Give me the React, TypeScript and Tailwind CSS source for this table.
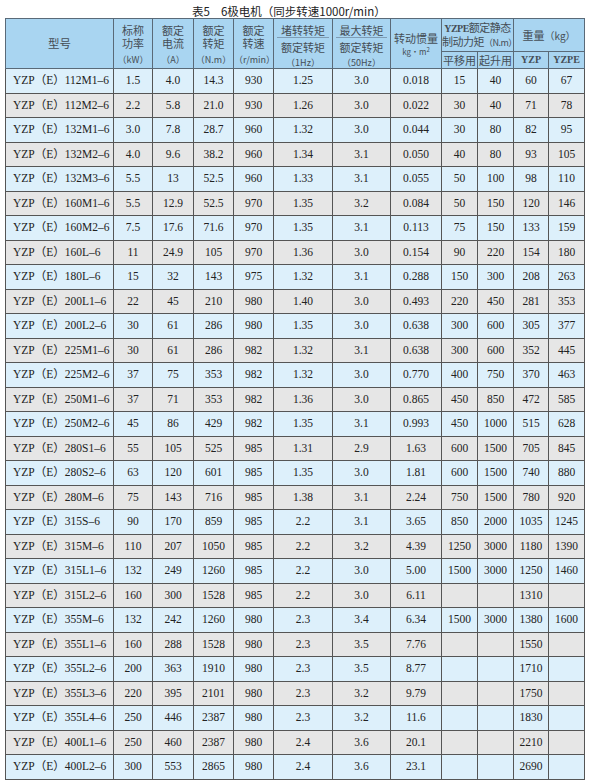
const rows: string[][] = [
  ['112M1–6', '1.5', '4.0', '14.3', '930', '1.25', '3.0', '0.018', '15', '40', '60', '67'],
  ['112M2–6', '2.2', '5.8', '21.0', '930', '1.26', '3.0', '0.022', '30', '40', '71', '78'],
  ['132M1–6', '3.0', '7.8', '28.7', '960', '1.32', '3.0', '0.044', '30', '80', '82', '95'],
  ['132M2–6', '4.0', '9.6', '38.2', '960', '1.34', '3.1', '0.050', '40', '80', '93', '105'],
  ['132M3–6', '5.5', '13', '52.5', '960', '1.33', '3.1', '0.055', '50', '100', '98', '110'],
  ['160M1–6', '5.5', '12.9', '52.5', '970', '1.35', '3.2', '0.084', '50', '150', '120', '146'],
  ['160M2–6', '7.5', '17.6', '71.6', '970', '1.35', '3.1', '0.113', '75', '150', '133', '159'],
  ['160L–6', '11', '24.9', '105', '970', '1.36', '3.0', '0.154', '90', '220', '154', '180'],
  ['180L–6', '15', '32', '143', '975', '1.32', '3.1', '0.288', '150', '300', '208', '263'],
  ['200L1–6', '22', '45', '210', '980', '1.40', '3.0', '0.493', '220', '450', '281', '353'],
  ['200L2–6', '30', '61', '286', '980', '1.35', '3.0', '0.638', '300', '600', '305', '377'],
  ['225M1–6', '30', '61', '286', '982', '1.32', '3.1', '0.638', '300', '600', '352', '445'],
  ['225M2–6', '37', '75', '353', '982', '1.32', '3.0', '0.770', '400', '750', '370', '463'],
  ['250M1–6', '37', '71', '353', '982', '1.36', '3.0', '0.865', '450', '850', '472', '585'],
  ['250M2–6', '45', '86', '429', '982', '1.35', '3.1', '0.993', '450', '1000', '515', '628'],
  ['280S1–6', '55', '105', '525', '985', '1.31', '2.9', '1.63', '600', '1500', '705', '845'],
  ['280S2–6', '63', '120', '601', '985', '1.35', '3.0', '1.81', '600', '1500', '740', '880'],
  ['280M–6', '75', '143', '716', '985', '1.38', '3.1', '2.24', '750', '1500', '780', '920'],
  ['315S–6', '90', '170', '859', '985', '2.2', '3.1', '3.65', '850', '2000', '1035', '1245'],
  ['315M–6', '110', '207', '1050', '985', '2.2', '3.2', '4.39', '1250', '3000', '1180', '1390'],
  ['315L1–6', '132', '249', '1260', '985', '2.2', '3.0', '5.00', '1500', '3000', '1250', '1460'],
  ['315L2–6', '160', '300', '1528', '985', '2.2', '3.0', '6.11', '', '', '1310', ''],
  ['355M–6', '132', '242', '1260', '980', '2.3', '3.4', '6.34', '1500', '3000', '1380', '1600'],
  ['355L1–6', '160', '288', '1528', '980', '2.3', '3.5', '7.76', '', '', '1550', ''],
  ['355L2–6', '200', '363', '1910', '980', '2.3', '3.5', '8.77', '', '', '1710', ''],
  ['355L3–6', '220', '395', '2101', '980', '2.3', '3.2', '9.79', '', '', '1750', ''],
  ['355L4–6', '250', '446', '2387', '980', '2.3', '3.2', '11.6', '', '', '1830', ''],
  ['400L1–6', '250', '460', '2387', '980', '2.4', '3.6', '20.1', '', '', '2210', ''],
  ['400L2–6', '300', '553', '2865', '980', '2.4', '3.6', '23.1', '', '', '2690', ''],
]

const widths = [108, 39, 41, 40, 40, 59, 58, 51, 36, 36, 35, 36]

// header cells that stack name + unit
function Rated({ a, b, unit }: { a: string; b: string; unit: string }) {
  return (
    <th rowSpan={2} className="border border-[#5a6a78] align-top pt-[5px] font-normal">
      <div className="leading-[13px]">
        {a}
        <br />
        {b}
      </div>
      <div className="mt-[5px] text-[9px] leading-[10px]">{unit}</div>
    </th>
  )
}

function Ratio({ top, unit }: { top: string; unit: string }) {
  return (
    <th rowSpan={2} className="border border-[#5a6a78] align-top pt-[4px] font-normal">
      <div className="mx-[3px] leading-[14px] border-b border-[#7f9db5]">{top}</div>
      <div className="mt-[2px] leading-[14px]">额定转矩</div>
      <div className="mt-[4px] text-[9px] leading-[10px]">{unit}</div>
    </th>
  )
}

export default function App() {
  return (
    <div className="w-[589px] h-[780px] bg-white font-['Liberation_Serif','Noto_Sans_CJK_SC',serif]">
      <div className="h-[18px] pt-[4px] pl-[192px] flex text-[11.5px] leading-[14px] text-[#222] font-['Noto_Sans_CJK_SC',sans-serif]">
        <span>表5</span>
        <span className="ml-[11px]">6极电机（同步转速1000r/min）</span>
      </div>
      <table className="ml-[5px] w-[579px] table-fixed border-collapse">
        <colgroup>
          {widths.map((w, i) => (
            <col key={i} style={{ width: w }} />
          ))}
        </colgroup>
        <thead className="bg-[#a9d5f1] text-[#454d55] text-[11px] font-['Noto_Sans_CJK_SC',sans-serif]">
          <tr className="h-[32px]">
            <th rowSpan={2} className="border border-[#5a6a78] font-normal text-[11.5px]">型号</th>
            <Rated a="标称" b="功率" unit="（kW）" />
            <Rated a="额定" b="电流" unit="（A）" />
            <Rated a="额定" b="转矩" unit="（N.m）" />
            <Rated a="额定" b="转速" unit="（r/min）" />
            <Ratio top="堵转转矩" unit="（1Hz）" />
            <Ratio top="最大转矩" unit="（50Hz）" />
            <th rowSpan={2} className="border border-[#5a6a78] font-normal">
              <div className="leading-[14px]">转动惯量</div>
              <div className="mt-[2px] text-[8px] leading-[10px]">
                kg·m<sup className="text-[6px]">2</sup>
              </div>
            </th>
            <th colSpan={2} className="border border-[#5a6a78] font-normal tracking-[-0.5px]">
              <div className="leading-[12px] whitespace-nowrap">
                <span className="font-['Liberation_Serif',serif] text-[10px] font-semibold">YZPE</span>额定静态
              </div>
              <div className="leading-[12px] whitespace-nowrap">
                制动力矩<span className="text-[9px]">（N.m）</span>
              </div>
            </th>
            <th colSpan={2} className="border border-[#5a6a78] font-normal">
              重量<span className="text-[10px]">（kg）</span>
            </th>
          </tr>
          <tr className="h-[17px]">
            <th className="border border-[#5a6a78] font-normal text-[11px] leading-[16px]">平移用</th>
            <th className="border border-[#5a6a78] font-normal text-[11px] leading-[16px]">起升用</th>
            <th className="border border-[#5a6a78] font-semibold text-[10px] leading-[16px] font-['Liberation_Serif',serif]">YZP</th>
            <th className="border border-[#5a6a78] font-semibold text-[10px] leading-[16px] font-['Liberation_Serif',serif]">YZPE</th>
          </tr>
        </thead>
        <tbody className="text-[11.5px] text-[#222]">
          {rows.map((r, i) => (
            <tr key={r[0]} className={`h-[24.5px] ${i % 2 === 0 ? 'bg-[#ddf0fb]' : 'bg-[#e6e6e6]'}`}>
              <td className="border border-[#555] pl-[7px] whitespace-nowrap">YZP（E）{r[0]}</td>
              {r.slice(1).map((v, j) => (
                <td key={j} className="border border-[#555] text-center whitespace-nowrap">
                  {v}
                </td>
              ))}
            </tr>
          ))}
        </tbody>
      </table>
    </div>
  )
}
